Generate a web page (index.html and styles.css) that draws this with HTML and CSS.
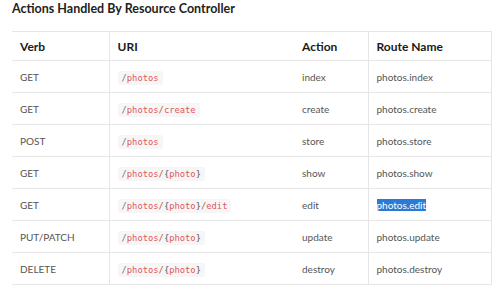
FILE: index.html
```html
<!DOCTYPE html>
<html lang="en">
<head>
  <meta charset="UTF-8" />
  <title>Actions Handled By Resource Controller</title>
  <link rel="stylesheet" href="styles.css">
</head>
<body>

  <h4 class="title">Actions Handled By Resource Controller</h4>

  <table class="routes">
    <thead>
      <tr>
        <th class="c1">Verb</th>
        <th class="c2">URI</th>
        <th class="c3">Action</th>
        <th class="c4">Route Name</th>
      </tr>
    </thead>
    <tbody>
      <tr>
        <td class="c1">GET</td>
        <td class="c2"><code><i>/</i><b>photos</b></code></td>
        <td class="c3">index</td>
        <td class="c4">photos.index</td>
      </tr>
      <tr>
        <td class="c1">GET</td>
        <td class="c2"><code><i>/</i><b>photos</b><i>/</i><b>create</b></code></td>
        <td class="c3">create</td>
        <td class="c4">photos.create</td>
      </tr>
      <tr>
        <td class="c1">POST</td>
        <td class="c2"><code><i>/</i><b>photos</b></code></td>
        <td class="c3">store</td>
        <td class="c4">photos.store</td>
      </tr>
      <tr>
        <td class="c1">GET</td>
        <td class="c2"><code><i>/</i><b>photos</b><i>/</i><em>{</em><b>photo</b><em>}</em></code></td>
        <td class="c3">show</td>
        <td class="c4">photos.show</td>
      </tr>
      <tr>
        <td class="c1">GET</td>
        <td class="c2"><code><i>/</i><b>photos</b><i>/</i><em>{</em><b>photo</b><em>}</em><i>/</i><b>edit</b></code></td>
        <td class="c3">edit</td>
        <td class="c4"><span class="selected">photos.edit</span></td>
      </tr>
      <tr>
        <td class="c1">PUT/PATCH</td>
        <td class="c2"><code><i>/</i><b>photos</b><i>/</i><em>{</em><b>photo</b><em>}</em></code></td>
        <td class="c3">update</td>
        <td class="c4">photos.update</td>
      </tr>
      <tr>
        <td class="c1">DELETE</td>
        <td class="c2"><code><i>/</i><b>photos</b><i>/</i><em>{</em><b>photo</b><em>}</em></code></td>
        <td class="c3">destroy</td>
        <td class="c4">photos.destroy</td>
      </tr>
    </tbody>
  </table>

</body>
</html>
```

FILE: styles.css
```css
body {
  font-family: 'Lato', 'Open Sans', sans-serif;
  background: #ffffff;
  margin: 0;
  padding: 0 12px;
  color: #555;
}
.title {
  margin: 0;
  padding-top: 1px;
  height: 31px;
  box-sizing: border-box;
  font-size: 12.5px;
  font-weight: 700;
  color: #222;
}
.routes {
  width: 479px;
  border-collapse: collapse;
  table-layout: fixed;
  border-top: 1px solid #e6e6e6;
}
.routes th,
.routes td {
  box-sizing: border-box;
  text-align: left;
  padding: 0 8px;
  border-bottom: 1px solid #e6e6e6;
}
.routes th {
  height: 29px;
  font-size: 12px;
  font-weight: 700;
  color: #1a1a1a;
}
.routes td {
  height: 32px;
  font-size: 10px;
  color: #555;
}
.c1 {
  width: 97px;
  border-right: 1px solid #e6e6e6;
}
.c2 {
  width: 185px;
}
.c3 {
  width: 74px;
  border-right: 1px solid #e6e6e6;
}
.c4 {
  width: 123px;
  border-right: 1px solid #e6e6e6;
}
code {
  font-family: 'DejaVu Sans Mono', monospace;
  font-size: 8.8px;
  background: #f6f6f6;
  padding: 2px 4px;
  border-radius: 2px;
}
code b {
  font-weight: 400;
  color: #e0585c;
}
code i {
  font-style: normal;
  color: #a86260;
}
code em {
  font-style: normal;
  color: #555;
}
.selected {
  background: #2a7ad6;
  color: #fff;
}
```
